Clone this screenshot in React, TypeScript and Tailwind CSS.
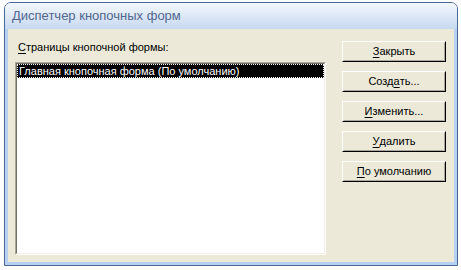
const font = { fontFamily: '"Liberation Sans", Arial, sans-serif' };

const buttons: { label: string; key: number }[] = [
    { label: 'Закрыть', key: 0 },
    { label: 'Создать...', key: 4 },
    { label: 'Изменить...', key: 0 },
    { label: 'Удалить', key: 0 },
    { label: 'По умолчанию', key: 0 },
];

const Mnemonic = ({ text, index }: { text: string; index: number }) => (
    <>
        {text.slice(0, index)}
        <span className="underline underline-offset-2">{text[index]}</span>
        {text.slice(index + 1)}
    </>
);

const XpButton = ({ label, mnemonic }: { label: string; mnemonic: number }) => (
    <button
        className="h-[21px] w-[104px] bg-[#ece9d8] border border-t-white border-l-white border-r-black border-b-black text-[11px] text-black leading-none">
        <span className="flex h-full w-full items-center justify-center border border-t-[#ece9d8] border-l-[#ece9d8] border-r-[#aca899] border-b-[#aca899]">
            <Mnemonic text={label} index={mnemonic}/>
        </span>
    </button>
);

const App = () => {
    return (
        <div className="w-[461px] h-[270px] bg-white pt-[2px] pl-[4px]" style={font}>
            <div className="w-[454px] h-[264px] flex flex-col rounded-t-[7px] border border-[#4a6894] overflow-hidden">
                <div className="h-[26px] shrink-0 flex items-center pl-[7px] bg-gradient-to-b from-[#f3f7fc] via-[#dde8f6] to-[#c6d9f1] text-[13px] text-[#51678f]">
                    Диспетчер кнопочных форм
                </div>
                <div className="flex-1 flex bg-[#ece9d8] border-x-[3px] border-b-[3px] border-[#b7cff0]">
                    <div className="flex flex-col pl-[7px] pt-[11px]">
                        <div className="pl-[3px] h-[15px] text-[11px] text-black leading-[15px]">
                            <Mnemonic text="Страницы кнопочной формы:" index={0}/>
                        </div>
                        <div className="mt-[7px] w-[311px] h-[193px] border border-t-[#aca899] border-l-[#aca899] border-r-white border-b-white">
                            <div className="w-full h-full bg-white border border-t-[#716f64] border-l-[#716f64] border-r-[#f1efe2] border-b-[#f1efe2]">
                                <div className="h-[14px] bg-black outline-1 outline-dotted outline-white -outline-offset-1 text-white text-[11px] leading-[14px] pl-[2px]">
                                    Главная кнопочная форма (По умолчанию)
                                </div>
                            </div>
                        </div>
                    </div>
                    <div className="flex flex-col gap-[9px] pl-[16px] pt-[12px]">
                        {buttons.map((b) => (
                            <XpButton key={b.label} label={b.label} mnemonic={b.key}/>
                        ))}
                    </div>
                </div>
            </div>
        </div>
    );
};

export default App;
